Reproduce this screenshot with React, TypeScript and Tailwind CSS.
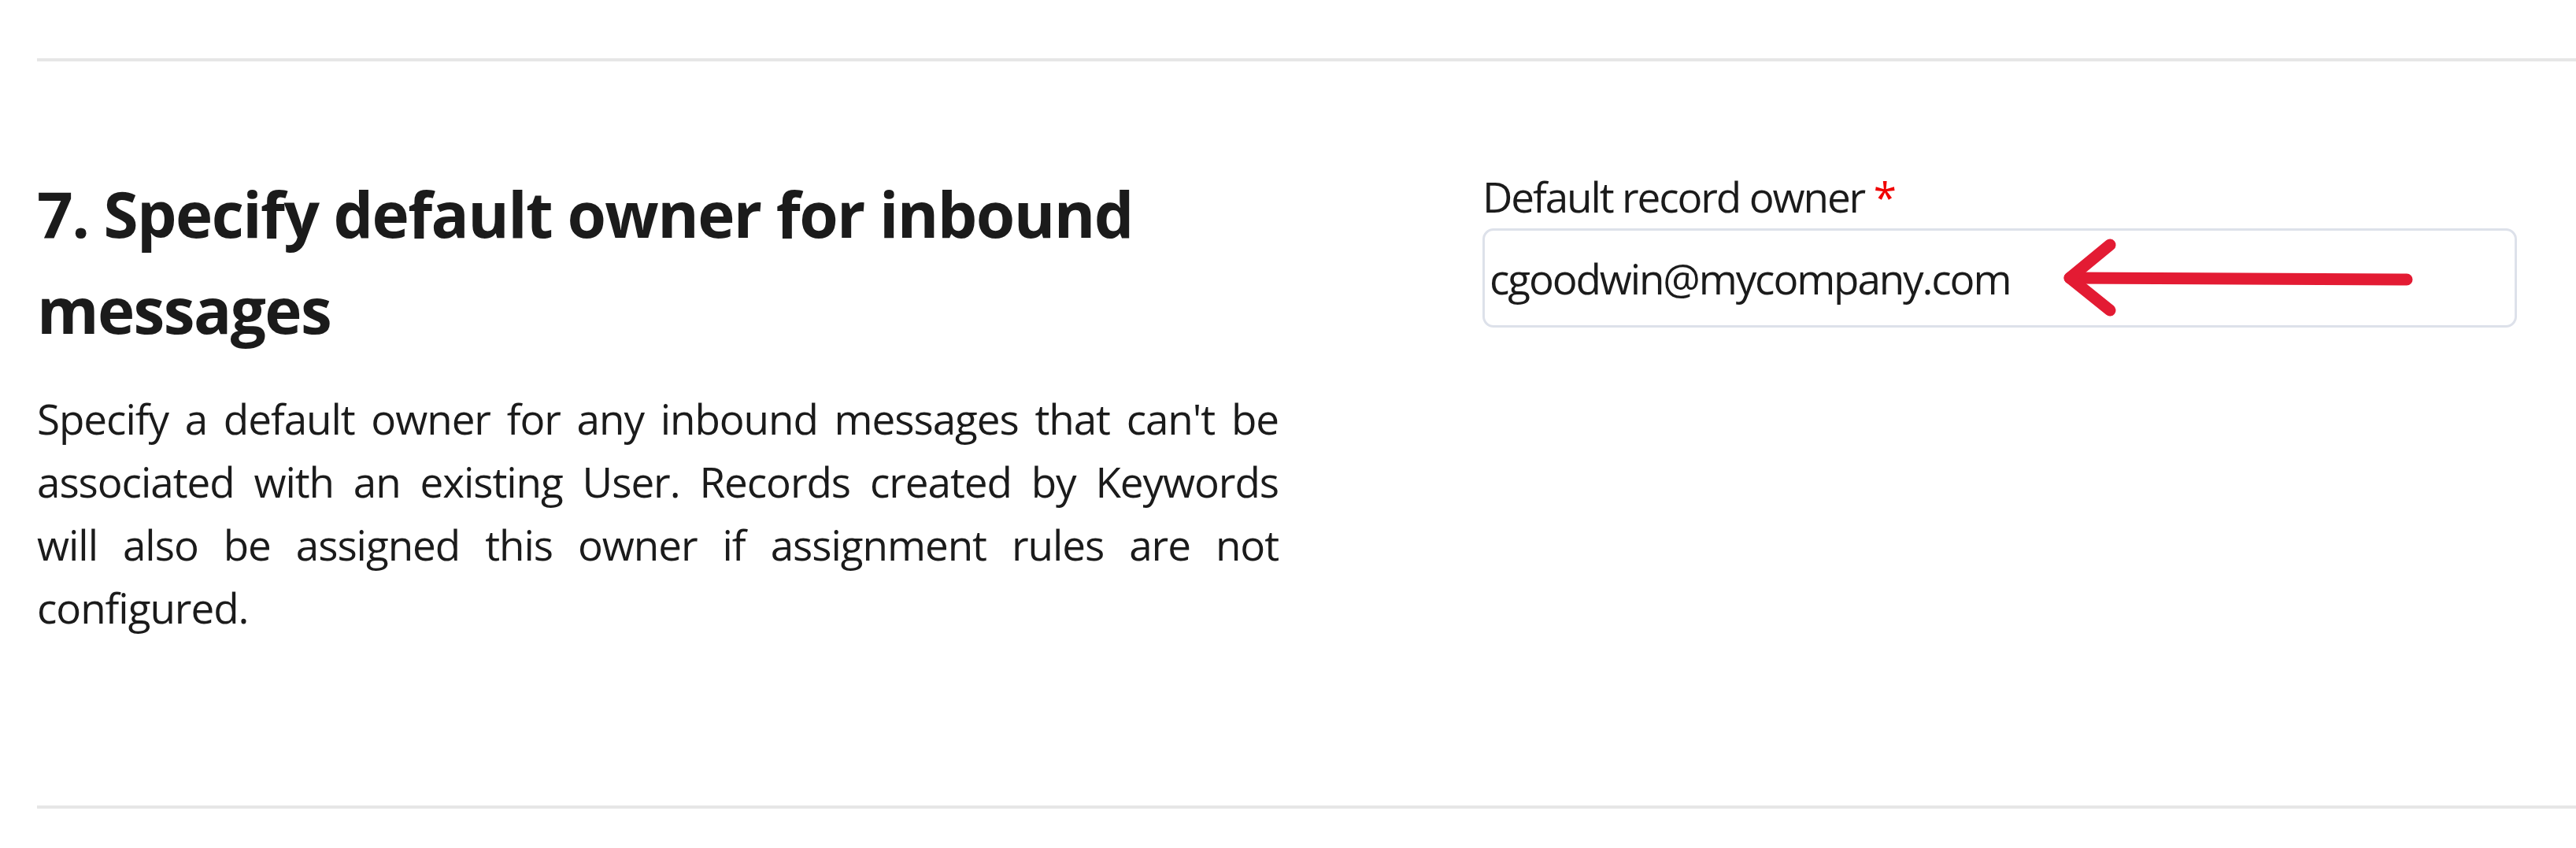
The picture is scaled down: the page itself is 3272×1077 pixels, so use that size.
import React from "react";

const bodyLines = [
  "Specify a default owner for any inbound messages that can't be",
  "associated with an existing User. Records created by Keywords",
  "will also be assigned this owner if assignment rules are not",
];

function ArrowMark() {
  return (
    <svg
      className="pointer-events-none absolute left-0 top-0 overflow-visible"
      width="1314"
      height="126"
      viewBox="0 0 1314 126"
      fill="none"
    >
      <path
        d="M1174 65 L746 63"
        stroke="#e31b33"
        strokeWidth="15"
        strokeLinecap="round"
      />
      <path
        d="M797 21 L746 63 L797 104"
        stroke="#e31b33"
        strokeWidth="15"
        strokeLinecap="round"
        strokeLinejoin="round"
      />
    </svg>
  );
}

export default function App() {
  return (
    <div
      className="w-[3272px] h-[1077px] overflow-hidden bg-white pl-[47px] pt-[74px] text-[#1b1b1b]"
      style={{ fontFamily: '"Open Sans", "Noto Sans", sans-serif' }}
    >
      <div className="h-[4px] bg-[#e6e6e6]" />

      <section className="flex pt-[132px] pb-[211px]">
        <div className="w-[1577px] shrink-0">
          <h2 className="text-[80px] font-bold leading-[122px] tracking-[-0.02em] text-[#1b1b1b]">
            7. Specify default owner for inbound messages
          </h2>
          <div className="mt-[38px] text-[53px] leading-[80px] tracking-[-0.02em] text-[#1b1b1b]">
            {bodyLines.map((line) => (
              <p key={line} className="text-justify [text-align-last:justify]">
                {line}
              </p>
            ))}
            <p>configured.</p>
          </div>
        </div>

        <div className="ml-[259px] w-[1314px] shrink-0">
          <label
            htmlFor="default-owner"
            className="block text-[53px] leading-[80px] tracking-[-0.04em] text-[#1b1b1b]"
          >
            Default record owner <span className="text-[#f00000]">*</span>
          </label>
          <div className="relative">
            <input
              id="default-owner"
              readOnly
              defaultValue="cgoodwin@mycompany.com"
              className="block h-[126px] w-full rounded-[14px] border-[3px] border-[#dde1ea] bg-white pl-[6px] text-[53px] tracking-[-0.04em] text-[#1b1b1b] outline-none"
            />
            <ArrowMark />
          </div>
        </div>
      </section>

      <div className="h-[4px] bg-[#e6e6e6]" />
    </div>
  );
}
